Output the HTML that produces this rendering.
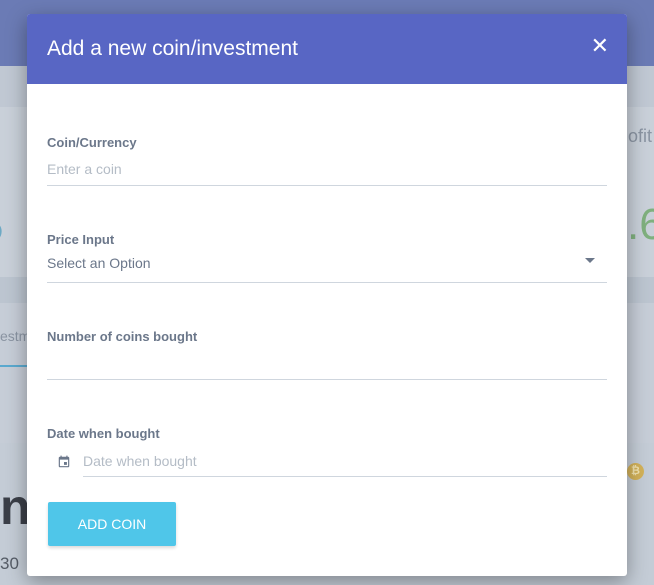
<!DOCTYPE html>
<html><head><style>
*{margin:0;padding:0;box-sizing:border-box}
body{width:654px;height:585px;overflow:hidden;position:relative;font-family:"Liberation Sans",sans-serif;background:#c3cbd5}
.b{position:absolute;left:0;width:654px}
.m{position:absolute;left:27px;top:14px;width:600px;height:562px;background:#fff;border-radius:3px;box-shadow:0 6px 20px rgba(0,0,0,.35);overflow:hidden}
.h{height:70px;background:#5866c4;color:#fff;font-size:21px;padding:23px 0 0 20px}
.x{position:absolute;right:18px;top:19px;color:#fff;font-size:22px}
.l{position:absolute;left:20px;font-size:13px;font-weight:bold;color:#6b778a}
.p{position:absolute;font-size:14px;color:#b4bcc6}
.u{position:absolute;height:1px;background:#cfd6de;right:20px}
.t{position:absolute;color:#8a94a2}
</style></head><body>
<div class="b" style="top:0;height:66px;background:#6b7bb5"></div>
<div class="b" style="top:66px;height:41px;background:#c0c8d3"></div>
<div class="b" style="top:107px;height:170px;background:#c9d0d9"></div>
<div class="b" style="top:277px;height:26px;background:#bcc5d0"></div>
<div class="b" style="top:303px;height:140px;background:#c6cdd7"></div>
<div class="b" style="top:443px;height:142px;background:#c4ccd6"></div>
<div style="position:absolute;left:0;top:365px;width:27px;height:2px;background:#5aa9cf"></div>
<div class="t" style="left:628px;top:126px;font-size:18px">ofit</div>
<div class="t" style="left:627px;top:200px;font-size:44px;color:#7fb07e">.6</div>
<div class="t" style="left:-21px;top:202px;font-size:44px;color:#6da9c4">5</div>
<div class="t" style="left:0;top:328px;font-size:14px">estm</div>
<div class="t" style="left:0;top:478px;font-size:50px;font-weight:bold;color:#3b3f48">n</div>
<div class="t" style="left:0;top:554px;font-size:17px;color:#555c66">30</div>
<div style="position:absolute;left:627px;top:463px;width:17px;height:17px;border-radius:50%;background:#d3b25a;color:#f3e4b0;font-size:11px;text-align:center;line-height:17px;font-weight:bold">₿</div>
<div class="m">
<div class="h">Add a new coin/investment</div>
<div class="x">✕</div>
<div class="l" style="top:121px">Coin/Currency</div>
<div class="p" style="left:20px;top:147px">Enter a coin</div>
<div class="u" style="left:20px;top:171px"></div>
<div class="l" style="top:218px">Price Input</div>
<div class="p" style="left:20px;top:241px;color:#6b778a">Select an Option</div>
<div style="position:absolute;left:558px;top:244px;border:5px solid transparent;border-top:5px solid #6b778a"></div>
<div class="u" style="left:20px;top:268px"></div>
<div class="l" style="top:315px">Number of coins bought</div>
<div class="u" style="left:20px;top:365px"></div>
<div class="l" style="top:412px">Date when bought</div>
<svg style="position:absolute;left:30px;top:441px" width="14" height="14" viewBox="0 0 24 24"><path fill="#6b778a" d="M17 12h-5v5h5v-5zM16 1v2H8V1H6v2H5c-1.1 0-2 .9-2 2v14c0 1.1.9 2 2 2h14c1.1 0 2-.9 2-2V5c0-1.1-.9-2-2-2h-1V1h-2zm3 18H5V8h14v11z"/></svg>
<div class="p" style="left:56px;top:439px">Date when bought</div>
<div class="u" style="left:56px;top:462px"></div>
<div style="position:absolute;left:21px;top:488px;width:128px;height:44px;background:#4fc6e9;border-radius:2px;box-shadow:0 2px 3px rgba(0,0,0,.15);color:#fff;font-size:14px;text-align:center;line-height:44px">ADD COIN</div>
</div>
</body></html>
